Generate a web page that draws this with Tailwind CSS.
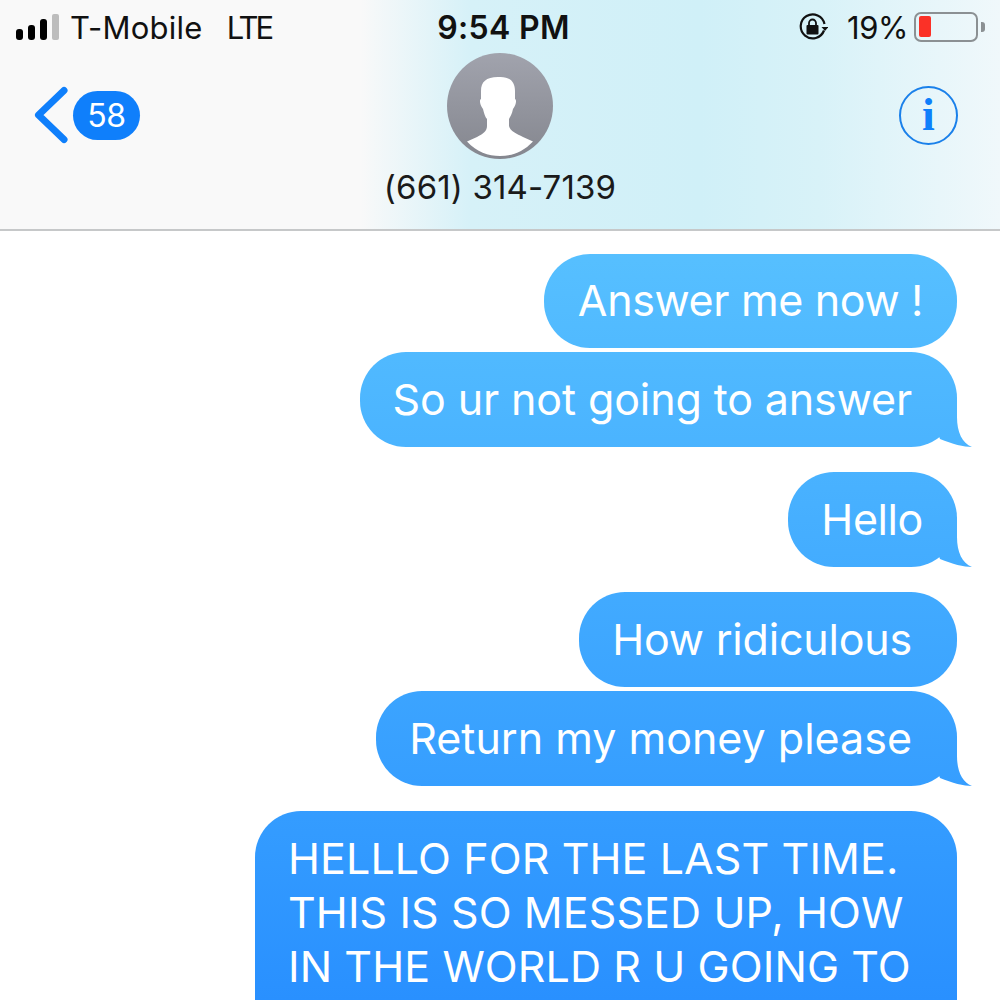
<!DOCTYPE html>
<html lang="en">
<head>
    <meta charset="UTF-8">
    <title>Messages</title>
    <script src="https://cdn.jsdelivr.net/npm/@tailwindcss/browser@4"></script>
</head>
<body class="h-screen overflow-hidden bg-white font-['Inter',sans-serif] text-[#111]">
    <!-- header -->
    <header class="h-[231px] border-b-2 border-[#c6c8c9] bg-[linear-gradient(90deg,#f9f9f9_0%,#f9f9f9_36%,#d6f1f8_47%,#d0f0f8_70%,#d8f2f8_82%,#f0f8fb_100%)]">
        <!-- status bar -->
        <div class="grid h-[53px] grid-cols-[1fr_auto_1fr] items-center">
            <div class="flex items-center pl-4">
                <div class="flex h-[26px] items-end gap-[5px]">
                    <span class="h-[11px] w-[7px] rounded-[3px] bg-black"></span>
                    <span class="h-[15px] w-[7px] rounded-[3px] bg-black"></span>
                    <span class="h-[21px] w-[7px] rounded-[3px] bg-black"></span>
                    <span class="h-[26px] w-[7px] rounded-[2px] bg-[#bdbdbd]"></span>
                </div>
                <span class="ml-[11px] pt-[3px] text-[31px] tracking-[0.25px]">T-Mobile</span>
                <span class="ml-[24px] pt-[3px] text-[31px] tracking-[-2.8px]">LTE</span>
            </div>
            <div class="ml-[7px] pt-[3px] text-[32px] font-semibold tracking-[0.3px]">9:54 PM</div>
            <div class="flex items-center justify-end pr-[15px]">
                <svg width="30" height="30" viewBox="0 0 30 30" fill="none">
                    <path d="M26 18.500A12 12 0 1 1 26.500 12" stroke="#111" stroke-width="2.200"/>
                    <path d="M23.500 15h7l-3.500 4z" fill="#111"/>
                    <rect x="8.500" y="13" width="12" height="9.500" rx="1" fill="#111"/>
                    <path d="M11 13.500V11a3.500 3.500 0 0 1 7 0v2.500" stroke="#111" stroke-width="1.800"/>
                </svg>
                <span class="ml-[19px] pt-[3px] text-[31px] tracking-[-0.4px]">19%</span>
                <div class="ml-[6px] flex h-[30px] w-[64px] items-stretch rounded-[7px] border-[2.5px] border-[#8b9093] p-[2.5px]">
                    <span class="w-[12px] rounded-[2px] bg-[#fb3127]"></span>
                </div>
                <span class="ml-[3px] h-[10px] w-[4px] rounded-r-[3px] bg-[#8b9093]"></span>
            </div>
        </div>
        <!-- nav row -->
        <div class="grid grid-cols-[1fr_auto_1fr]">
            <div class="flex h-[124px] items-center pl-[34px]">
                <svg width="34" height="58" viewBox="0 0 34 58" fill="none">
                    <path d="M30 4.500 4.500 29 30 53.500" stroke="#0f7ffb" stroke-width="7" stroke-linecap="round" stroke-linejoin="round"/>
                </svg>
                <span class="ml-[5px] flex h-[49px] w-[67px] items-center justify-center rounded-full bg-[#0f7ffb] pt-[1px] text-[32px] tracking-[-0.3px] text-white">58</span>
            </div>
            <div class="flex flex-col items-center">
                <div class="h-[106px] w-[106px] rounded-full bg-gradient-to-b from-[#a1a3ad] to-[#85878f]">
                    <svg width="106" height="106" viewBox="0 0 106 106">
                        <path fill="#fff" d="M51 24C63 23 68 29 68 38L68 46C70 47 69 52 66 56C65 61 63 64 62 66L62 73C63 78 70 81 76 84L86 88.500C76 99 65 103 53 103C41 103 30 99 20 88.500L30 84C36 81 40 78 40 73L40 66C38 64 37 60 36 56C33 52 32 47 34 46L34 38C34 29 39 24 51 24Z"/>
                    </svg>
                </div>
                <span class="mt-[9px] text-[33px] leading-[38px] tracking-[0.15px] text-[#1a1a1a]">(661) 314-7139</span>
            </div>
            <div class="flex h-[124px] items-center justify-end pr-[42px]">
                <div class="flex h-[59px] w-[59px] items-center justify-center rounded-full border-[2.5px] border-[#1a80ea]">
                    <span class="font-['Liberation_Serif',serif] text-[46px] leading-none font-bold text-[#0f7ffb]">i</span>
                </div>
            </div>
        </div>
    </header>

    <!-- messages -->
    <main class="flex flex-col items-end pt-[23px] pr-[43px] text-[43px] leading-[54px] tracking-[-0.12px] text-white">
        <div class="flex h-[94px] w-fit items-center rounded-[46px] bg-gradient-to-b from-[#66cffe] to-[#2990ff] bg-fixed pr-[34px] pb-[2px] pl-[34px] tracking-[-0.35px]">Answer me now !</div>

        <div class="relative mt-[4px] flex h-[95px] w-fit items-center rounded-[46px] bg-gradient-to-b from-[#66cffe] to-[#2990ff] bg-fixed pr-[45px] pb-[2px] pl-[33px]">
            So ur not going to answer
            <div class="absolute right-[-15px] bottom-0 h-[50px] w-[40px] bg-gradient-to-b from-[#66cffe] to-[#2990ff] bg-fixed [clip-path:path('M25_0L25_20C25_35_30_46_40_50C32_50_20_47_8_42L0_20Z')]"></div>
        </div>

        <div class="relative mt-[25px] flex h-[95px] w-fit items-center rounded-[46px] bg-gradient-to-b from-[#66cffe] to-[#2990ff] bg-fixed pr-[34px] pb-[2px] pl-[33px] tracking-[-0.4px]">
            Hello
            <div class="absolute right-[-15px] bottom-0 h-[50px] w-[40px] bg-gradient-to-b from-[#66cffe] to-[#2990ff] bg-fixed [clip-path:path('M25_0L25_20C25_35_30_46_40_50C32_50_20_47_8_42L0_20Z')]"></div>
        </div>

        <div class="mt-[25px] flex h-[95px] w-fit items-center rounded-[46px] bg-gradient-to-b from-[#66cffe] to-[#2990ff] bg-fixed pr-[45px] pb-[2px] pl-[33px] tracking-[-0.2px]">How ridiculous</div>

        <div class="relative mt-[4px] flex h-[95px] w-fit items-center rounded-[46px] bg-gradient-to-b from-[#66cffe] to-[#2990ff] bg-fixed pr-[45px] pb-[2px] pl-[33px] tracking-[0px]">
            Return my money please
            <div class="absolute right-[-15px] bottom-0 h-[50px] w-[40px] bg-gradient-to-b from-[#66cffe] to-[#2990ff] bg-fixed [clip-path:path('M25_0L25_20C25_35_30_46_40_50C32_50_20_47_8_42L0_20Z')]"></div>
        </div>

        <div class="mt-[25px] h-[189px] w-[702px] rounded-t-[46px] bg-gradient-to-b from-[#66cffe] to-[#2990ff] bg-fixed pt-[20px] pl-[33px] tracking-[0.1px]">
            HELLLO FOR THE LAST TIME.<br>THIS IS SO MESSED UP, HOW<br>IN THE WORLD R U GOING TO
        </div>
    </main>
</body>
</html>
